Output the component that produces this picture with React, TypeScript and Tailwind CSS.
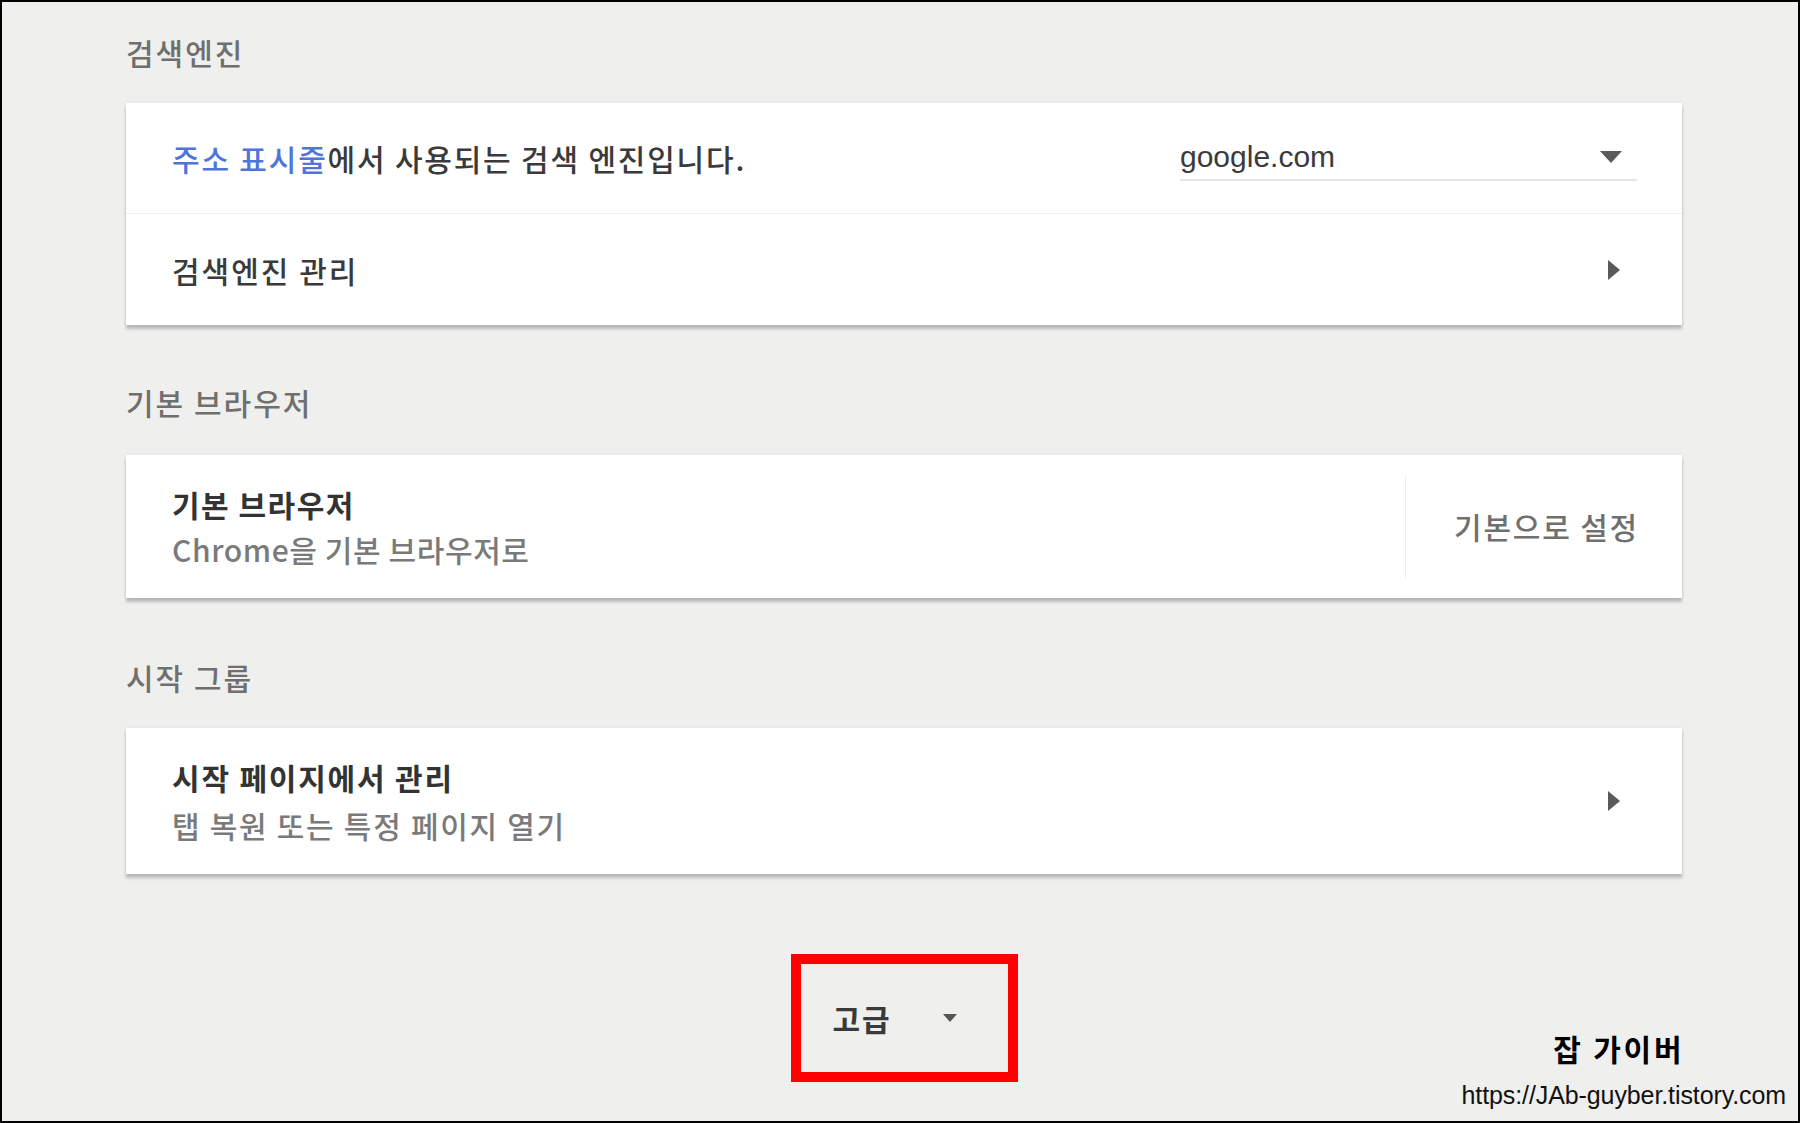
import React from "react";

function DownTri({ w, h, color }: { w: number; h: number; color: string }) {
  return (
    <svg width={w} height={h} viewBox={`0 0 ${w} ${h}`}>
      <polygon points={`0,0 ${w},0 ${w / 2},${h}`} fill={color} />
    </svg>
  );
}

function RightTri() {
  return (
    <svg width={12} height={20} viewBox="0 0 12 20">
      <polygon points="0,0 12,10 0,20" fill="#5a5a5a" />
    </svg>
  );
}

function SectionHeader({ children }: { children: React.ReactNode }) {
  return (
    <div className="h-[40px] leading-[40px] text-[30px] tracking-[2px] font-medium text-[#6f6f6f]">{children}</div>
  );
}

const card = "bg-white shadow-[0_4px_3px_rgba(0,0,0,0.22),0_0_4px_rgba(0,0,0,0.06)]";

export default function App() {
  return (
    <div className="relative w-[1800px] h-[1123px] box-border border-2 border-black bg-[#efefee] font-['Noto_Sans_CJK_KR','Liberation_Sans',sans-serif] overflow-hidden">
      <div className="ml-[124px] w-[1556px] pt-[30px] flex flex-col">
        {/* 검색엔진 */}
        <SectionHeader>검색엔진</SectionHeader>
        <div className={`mt-[31px] ${card} flex flex-col`}>
          <div className="h-[110px] flex items-center justify-between pl-[46px] pr-[45px]">
            <div className="text-[30px] leading-[40px] font-medium text-[#3a3a3a] tracking-[1.8px]">
              <span className="text-[#4f74dc]">주소 표시줄</span>에서 사용되는 검색 엔진입니다.
            </div>
            <div className="w-[457px] h-[46px] flex items-center justify-between pr-[15px] border-b-2 border-[#e6e6e6]">
              <span className="font-['Liberation_Sans',sans-serif] text-[30px] leading-[40px] text-[#3a3a3a]">google.com</span>
              <DownTri w={22} h={12} color="#5a5a5a" />
            </div>
          </div>
          <div className="h-px bg-[#f0f0f0]" />
          <div className="h-[111px] flex items-center justify-between pl-[46px] pr-[62px]">
            <div className="text-[30px] leading-[40px] font-medium text-[#3a3a3a] tracking-[2px]">검색엔진 관리</div>
            <RightTri />
          </div>
        </div>

        {/* 기본 브라우저 */}
        <div className="mt-[57px]">
          <SectionHeader>기본 브라우저</SectionHeader>
        </div>
        <div className={`mt-[33px] ${card} h-[143px] flex`}>
          <div className="flex-1 pl-[46px] flex flex-col justify-center">
            <div className="text-[30px] leading-[40px] font-bold text-[#333333] tracking-[1.5px]">기본 브라우저</div>
            <div className="mt-[5px] text-[30px] leading-[40px] font-medium text-[#7a7a7a] tracking-[0.6px]">Chrome을 기본 브라우저로</div>
          </div>
          <div className="w-px h-[103px] self-center bg-[#ececec]" />
          <div className="pl-[48px] pr-[43px] flex items-center text-[30px] font-medium text-[#6f6f6f] tracking-[1.8px]">기본으로 설정</div>
        </div>

        {/* 시작 그룹 */}
        <div className="mt-[59px]">
          <SectionHeader>시작 그룹</SectionHeader>
        </div>
        <div className={`mt-[31px] ${card} h-[146px] flex items-center justify-between pl-[46px] pr-[62px]`}>
          <div className="flex flex-col">
            <div className="text-[30px] leading-[40px] font-bold text-[#333333] tracking-[1.8px]">시작 페이지에서 관리</div>
            <div className="mt-[8px] text-[30px] leading-[40px] font-medium text-[#7a7a7a] tracking-[1.7px]">탭 복원 또는 특정 페이지 열기</div>
          </div>
          <RightTri />
        </div>

        {/* 고급 */}
        <div className="mt-[80px] flex justify-center">
          <div className="w-[227px] h-[128px] box-border border-[10px] border-[#ff0000] flex items-center">
            <span className="pl-[32px] text-[30px] leading-[40px] font-bold text-[#3a3a3a] tracking-[2px]">고급</span>
            <span className="ml-[51px] flex items-center">
              <DownTri w={14} h={8} color="#555555" />
            </span>
          </div>
        </div>
      </div>

      {/* watermark */}
      <div className="absolute right-[12px] bottom-[11px] flex flex-col items-center">
        <div className="pr-[10px] text-[30px] leading-[40px] font-bold text-black tracking-[2.8px]">잡 가이버</div>
        <div className="mt-[12px] font-['Liberation_Sans',sans-serif] text-[25px] leading-[30px] text-[#111111] tracking-[-0.1px]">https://JAb-guyber.tistory.com</div>
      </div>
    </div>
  );
}
